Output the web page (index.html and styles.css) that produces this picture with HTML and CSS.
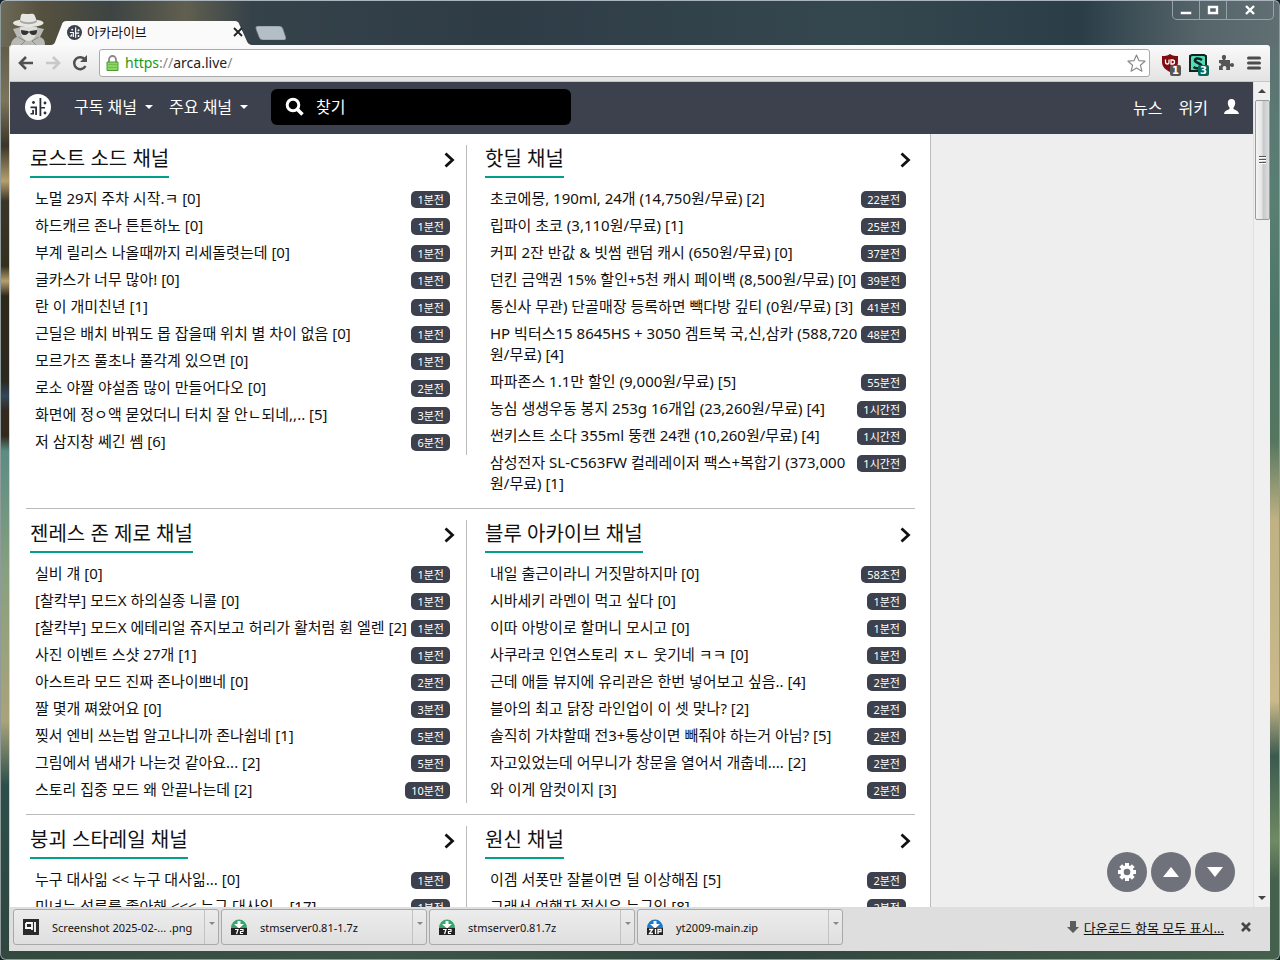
FILE: index.html
```html
<!DOCTYPE html>
<html lang="ko">
<head>
<meta charset="utf-8">
<title>아카라이브</title>
<link rel="stylesheet" href="styles.css">
</head>
<body>
<div class="window">
  <div class="titlebar">
    <svg class="incognito" width="40" height="32" viewBox="0 0 40 32" aria-hidden="true">
      <path d="M1 32c0-4 3-7 6-8L3 16l8-2h14l9 2-4 8c3 1 5 3 5 8z" fill="#b9b9b5"/>
      <path d="M10 14c0 9 4 14 8.500 14S27 23 27 14z" fill="#deded9"/>
      <path d="M3 10c0-2 5-3 7-3l1-5c1-2 4-1 6.500-1s6-1 7 1l2 5c3 0 7 1 7 3s-6 4-15 4S3 12 3 10z" fill="#e6e6e2"/>
      <path d="M10 7c5 3 12 3 17 0v2c-5 3-12 3-17 0z" fill="#a8a8a4"/>
      <path d="M11 17l7 1 1 1 1-1 7-1c0 4-1 5-4 5-2 0-3-2-4-3-1 1-2 3-4 3-3 0-4-1-4-5z" fill="#333"/>
      <path d="M8 24l7 4-4 4M29 24l-7 4 4 4" fill="none" stroke="#888" stroke-width="1"/>
    </svg>
    <div class="tab">
      <svg class="tab-shape" viewBox="0 0 216 24" preserveAspectRatio="none" aria-hidden="true"><path d="M0 24c4 0 5-2 6-5L12 4c1-3 2-4 5-4h173c3 0 4 1 5 4l7 15c1 3 3 5 7 5z" fill="#fafafa"/></svg>
      <svg class="favicon" width="15" height="15" viewBox="0 0 26 26" aria-hidden="true"><circle cx="13" cy="13" r="13" fill="#3d414d"/><g fill="#fff"><path d="M14 4h2v18h-2zM16 13h5v2h-5zM5 12h7v9h-2v-7H5zM7 16h2v4H5v-2h2z"/><circle cx="9" cy="8" r="1.700"/><circle cx="20" cy="9" r="1.700"/><circle cx="20" cy="19" r="1.700"/></g></svg>
      <span class="tab-title">아카라이브</span>
      <button class="tab-close" aria-label="탭 닫기"><svg width="10" height="10" viewBox="0 0 10 10"><path d="M1 1l8 8M9 1L1 9" stroke="#222" stroke-width="1.800"/></svg></button>
    </div>
    <button class="new-tab" aria-label="새 탭"><svg width="31" height="14" viewBox="0 0 31 14"><path d="M3 0h21q3 0 4 3l3 9q0 2-2 2H8q-3 0-4-3L1 3Q0 0 3 0z" fill="#b4bec6" stroke="#6d7a82" stroke-width=".6"/></svg></button>
    <div class="window-buttons">
      <button aria-label="최소화"><svg width="12" height="10" viewBox="0 0 12 10"><path d="M.5 6.500h11v3H.5z" fill="#fff" stroke="#556" stroke-width=".5"/></svg></button>
      <button aria-label="최대화"><svg width="12" height="10" viewBox="0 0 12 10"><path d="M2 2h8v6H2z" fill="none" stroke="#fff" stroke-width="2.400"/></svg></button>
      <button class="close" aria-label="닫기"><svg width="12" height="10" viewBox="0 0 12 10"><path d="M2 1l8 8M10 1L2 9" stroke="#fff" stroke-width="2.400"/></svg></button>
    </div>
  </div>

  <div class="client">
    <div class="toolbar">
      <button aria-label="뒤로"><svg width="16" height="14" viewBox="0 0 16 14"><path d="M8 1L2 7l6 6M2 7h13" fill="none" stroke="#505050" stroke-width="2.600"/></svg></button>
      <button aria-label="앞으로"><svg width="16" height="14" viewBox="0 0 16 14"><path d="M8 1l6 6-6 6M14 7H1" fill="none" stroke="#c8c8c8" stroke-width="2.600"/></svg></button>
      <button aria-label="새로고침"><svg width="16" height="16" viewBox="0 0 16 16"><path d="M13 4.500A6 6 0 1 0 13.500 11" fill="none" stroke="#505050" stroke-width="2.500"/><path d="M15 0v7H8z" fill="#505050"/></svg></button>
      <div class="omnibox">
        <svg width="13" height="16" viewBox="0 0 13 16" aria-hidden="true"><path d="M3 7V4.500a3.500 3.500 0 0 1 7 0V7" fill="none" stroke="#888" stroke-width="1.800"/><path d="M1 7h11v8.500H1z" fill="#8bd562" stroke="#4e9b35"/><path d="M2 9.500h9M2 12.500h9" stroke="#6fbf4b"/></svg>
        <a class="url" href="#"><span class="secure">https</span><span class="dim">://</span>arca.live<span class="dim">/</span></a>
        <button aria-label="북마크"><svg width="19" height="18" viewBox="0 0 19 18"><path d="M9.500 1l2.500 5.700 6 .5-4.600 4 1.500 6-5.400-3.300-5.400 3.300 1.500-6L1 7.200l6-.5z" fill="#fff" stroke="#8a8a8a" stroke-width="1.200" stroke-linejoin="round"/></svg></button>
      </div>
      <button class="ext" aria-label="uBlock"><svg width="18" height="18" viewBox="0 0 18 18"><path d="M9 0c3 2 5 2 8 2v6c0 5-4 8-8 10C5 16 1 13 1 8V2c3 0 5 0 8-2z" fill="#800b10"/><path d="M4.500 5.500V8q0 2 1.800 2T8 8V5.500M10 6h1.500a2 2 0 0 1 0 4H10z" fill="none" stroke="#fff" stroke-width="1.300"/></svg><span class="count">1</span></button>
      <button class="ext" aria-label="Stylus"><svg width="19" height="19" viewBox="0 0 19 19"><path d="M2 2l2-1h12l2 1v15H2z" fill="#4fdcb8" stroke="#10231f" stroke-width="2"/><path d="M14 6c-3-2-7-2-7 .500S13.500 9 13.500 12s-5 3-8 1" fill="none" stroke="#10231f" stroke-width="2.600"/></svg><span class="count green">3</span></button>
      <button class="ext" aria-label="확장 프로그램"><svg width="16" height="16" viewBox="0 0 16 16"><path d="M1 5h4C3 2 4 0 6 0s3 2 1 5h5v4c2-2 4-1 4 1s-2 3-4 1v4H8c1-3 0-4-1.500-4S4 12 5 15H1v-4c3 0 3-3 0-3z" fill="#555"/></svg></button>
      <button class="ext" aria-label="메뉴"><svg width="14" height="14" viewBox="0 0 14 14"><path d="M1.500 2h11M1.500 7h11M1.500 12h11" stroke="#4c4c4c" stroke-width="3" stroke-linecap="round"/></svg></button>
    </div>

    <div class="viewport">
      <div class="page">
        <header class="site-header">
          <a class="logo" href="#" aria-label="아카라이브"><svg width="26" height="26" viewBox="0 0 26 26"><circle cx="13" cy="13" r="13" fill="#fff"/><g fill="#2b2e38"><path d="M14.500 4h1.800v18h-1.800zM16 13h4v1.600h-4zM5.500 12.500H12V21h-1.800v-6.800H5.500zM7.200 16H9v4.500H5.500V19h1.700z"/><circle cx="8.500" cy="8.500" r="1.400"/><circle cx="20" cy="9" r="1.400"/><circle cx="20" cy="19" r="1.400"/></g></svg></a>
          <nav class="main-nav">
            <button>구독 채널<i class="caret"></i></button>
            <button>주요 채널<i class="caret"></i></button>
          </nav>
          <label class="search">
            <svg width="20" height="20" viewBox="0 0 20 20" aria-hidden="true"><circle cx="8" cy="8" r="5.800" fill="none" stroke="#fff" stroke-width="3"/><path d="M12 12l5.500 5.500" stroke="#fff" stroke-width="3.600"/></svg>
            <input type="text" placeholder="찾기" aria-label="찾기">
          </label>
          <nav class="user-nav">
            <a href="#">뉴스</a>
            <a href="#">위키</a>
            <a href="#" aria-label="사용자"><svg width="15" height="15" viewBox="0 0 15 15"><path d="M7.500 0C10 0 11.500 2 11.200 4.500c-.2 2-1 3-1.700 4V10c1 1 5 1.300 5.500 5H0c.5-3.700 4.500-4 5.500-5V8.500c-.7-1-1.500-2-1.700-4C3.500 2 5 0 7.500 0z" fill="#fff"/></svg></a>
          </nav>
        </header>
        <div class="content">
          <main class="boards">
            <div class="board-row">
              <section class="board">
                <h2><a href="#">로스트 소드 채널</a><a class="more" href="#" aria-label="더 보기"><svg width="11" height="16" viewBox="0 0 11 16"><path d="M1.500 1.500L8.500 8l-7 6.500" fill="none" stroke="#111" stroke-width="2.800"/></svg></a></h2>
                <ul>
                  <li><a href="#">노멀 29지 주차 시작.ㅋ [0]</a><time>1분전</time></li>
                  <li><a href="#">하드캐르 존나 튼튼하노 [0]</a><time>1분전</time></li>
                  <li><a href="#">부계 릴리스 나올때까지 리세돌렷는데 [0]</a><time>1분전</time></li>
                  <li><a href="#">글카스가 너무 많아! [0]</a><time>1분전</time></li>
                  <li><a href="#">란 이 개미친년 [1]</a><time>1분전</time></li>
                  <li><a href="#">근딜은 배치 바꿔도 몹 잡을때 위치 별 차이 없음 [0]</a><time>1분전</time></li>
                  <li><a href="#">모르가즈 풀초나 풀각계 있으면 [0]</a><time>1분전</time></li>
                  <li><a href="#">로소 야짤 야설좀 많이 만들어다오 [0]</a><time>2분전</time></li>
                  <li><a href="#">화면에 정ㅇ액 묻었더니 터치 잘 안ㄴ되네,,.. [5]</a><time>3분전</time></li>
                  <li><a href="#">저 삼지창 쎄긴 쎔 [6]</a><time>6분전</time></li>
                </ul>
              </section>
              <section class="board">
                <h2><a href="#">핫딜 채널</a><a class="more" href="#" aria-label="더 보기"><svg width="11" height="16" viewBox="0 0 11 16"><path d="M1.500 1.500L8.500 8l-7 6.500" fill="none" stroke="#111" stroke-width="2.800"/></svg></a></h2>
                <ul>
                  <li><a href="#">초코에몽, 190ml, 24개 (14,750원/무료) [2]</a><time>22분전</time></li>
                  <li><a href="#">립파이 초코 (3,110원/무료) [1]</a><time>25분전</time></li>
                  <li><a href="#">커피 2잔 반값 &amp; 빗썸 랜덤 캐시 (650원/무료) [0]</a><time>37분전</time></li>
                  <li><a href="#">던킨 금액권 15% 할인+5천 캐시 페이백 (8,500원/무료) [0]</a><time>39분전</time></li>
                  <li><a href="#">통신사 무관) 단골매장 등록하면 빽다방 깊티 (0원/무료) [3]</a><time>41분전</time></li>
                  <li><a href="#">HP 빅터스15 8645HS + 3050 겜트북 국,신,삼카 (588,720원/무료) [4]</a><time>48분전</time></li>
                  <li><a href="#">파파존스 1.1만 할인 (9,000원/무료) [5]</a><time>55분전</time></li>
                  <li><a href="#">농심 생생우동 봉지 253g 16개입 (23,260원/무료) [4]</a><time>1시간전</time></li>
                  <li><a href="#">썬키스트 소다 355ml 뚱캔 24캔 (10,260원/무료) [4]</a><time>1시간전</time></li>
                  <li><a href="#">삼성전자 SL-C563FW 컬레레이저 팩스+복합기 (373,000원/무료) [1]</a><time>1시간전</time></li>
                </ul>
              </section>
            </div>
            <div class="board-row">
              <section class="board">
                <h2><a href="#">젠레스 존 제로 채널</a><a class="more" href="#" aria-label="더 보기"><svg width="11" height="16" viewBox="0 0 11 16"><path d="M1.500 1.500L8.500 8l-7 6.500" fill="none" stroke="#111" stroke-width="2.800"/></svg></a></h2>
                <ul>
                  <li><a href="#">실비 걔 [0]</a><time>1분전</time></li>
                  <li><a href="#">[찰칵부] 모드X 하의실종 니콜 [0]</a><time>1분전</time></li>
                  <li><a href="#">[찰칵부] 모드X 에테리얼 쥬지보고 허리가 활처럼 휜 엘렌 [2]</a><time>1분전</time></li>
                  <li><a href="#">사진 이벤트 스샷 27개 [1]</a><time>1분전</time></li>
                  <li><a href="#">아스트라 모드 진짜 존나이쁘네 [0]</a><time>2분전</time></li>
                  <li><a href="#">짤 몇개 쪄왔어요 [0]</a><time>3분전</time></li>
                  <li><a href="#">찢서 엔비 쓰는법 알고나니까 존나쉽네 [1]</a><time>5분전</time></li>
                  <li><a href="#">그림에서 냄새가 나는것 같아요... [2]</a><time>5분전</time></li>
                  <li><a href="#">스토리 집중 모드 왜 안끝나는데 [2]</a><time>10분전</time></li>
                </ul>
              </section>
              <section class="board">
                <h2><a href="#">블루 아카이브 채널</a><a class="more" href="#" aria-label="더 보기"><svg width="11" height="16" viewBox="0 0 11 16"><path d="M1.500 1.500L8.500 8l-7 6.500" fill="none" stroke="#111" stroke-width="2.800"/></svg></a></h2>
                <ul>
                  <li><a href="#">내일 출근이라니 거짓말하지마 [0]</a><time>58초전</time></li>
                  <li><a href="#">시바세키 라멘이 먹고 싶다 [0]</a><time>1분전</time></li>
                  <li><a href="#">이따 아방이로 할머니 모시고 [0]</a><time>1분전</time></li>
                  <li><a href="#">사쿠라코 인연스토리 ㅈㄴ 웃기네 ㅋㅋ [0]</a><time>1분전</time></li>
                  <li><a href="#">근데 애들 뷰지에 유리관은 한번 넣어보고 싶음.. [4]</a><time>2분전</time></li>
                  <li><a href="#">블아의 최고 닭장 라인업이 이 셋 맞나? [2]</a><time>2분전</time></li>
                  <li><a href="#">솔직히 가챠할때 전3+통상이면 빼줘야 하는거 아님? [5]</a><time>2분전</time></li>
                  <li><a href="#">자고있었는데 어무니가 창문을 열어서 개춥네.... [2]</a><time>2분전</time></li>
                  <li><a href="#">와 이게 암컷이지 [3]</a><time>2분전</time></li>
                </ul>
              </section>
            </div>
            <div class="board-row">
              <section class="board">
                <h2><a href="#">붕괴 스타레일 채널</a><a class="more" href="#" aria-label="더 보기"><svg width="11" height="16" viewBox="0 0 11 16"><path d="M1.500 1.500L8.500 8l-7 6.500" fill="none" stroke="#111" stroke-width="2.800"/></svg></a></h2>
                <ul>
                  <li><a href="#">누구 대사읾 &lt;&lt; 누구 대사읾... [0]</a><time>1분전</time></li>
                  <li><a href="#">미녀는 석류를 좋아해 &lt;&lt;&lt; 누구 대사임... [17]</a><time>1분전</time></li>
                </ul>
              </section>
              <section class="board">
                <h2><a href="#">원신 채널</a><a class="more" href="#" aria-label="더 보기"><svg width="11" height="16" viewBox="0 0 11 16"><path d="M1.500 1.500L8.500 8l-7 6.500" fill="none" stroke="#111" stroke-width="2.800"/></svg></a></h2>
                <ul>
                  <li><a href="#">이겜 서폿만 잘붙이면 딜 이상해짐 [5]</a><time>2분전</time></li>
                  <li><a href="#">그래서 여행자 정실은 누구임 [8]</a><time>2분전</time></li>
                </ul>
              </section>
            </div>
          </main>
        </div>
        <div class="floating">
          <button aria-label="설정"><svg width="20" height="20" viewBox="0 0 20 20"><g stroke="#fff" stroke-width="4"><path d="M10 1v18M1 10h18M3.700 3.700l12.600 12.600M16.300 3.700L3.700 16.300"/></g><circle cx="10" cy="10" r="6.800" fill="#fff"/><circle cx="10" cy="10" r="3.300" fill="#70727b"/></svg></button>
          <button aria-label="맨 위로"><svg width="16" height="10" viewBox="0 0 16 10"><path d="M8 0l8 10H0z" fill="#fff"/></svg></button>
          <button aria-label="맨 아래로"><svg width="16" height="10" viewBox="0 0 16 10"><path d="M0 0h16L8 10z" fill="#fff"/></svg></button>
        </div>
      </div>
      <div class="scrollbar" aria-hidden="true">
        <svg width="8" height="5" viewBox="0 0 8 5"><path d="M4 0l4 4H0z" fill="#444"/></svg>
        <div class="thumb"><i></i><i></i><i></i></div>
        <svg class="end" width="8" height="5" viewBox="0 0 8 5"><path d="M0 0h8L4 4z" fill="#444"/></svg>
      </div>
    </div>

    <footer class="downloads">
      <div class="download">
        <button class="file"><svg width="16" height="16" viewBox="0 0 16 16"><path d="M0 0h16v16H0z" fill="#2b2b2b"/><path d="M3 4h6v7M9 9H3V4M12 3v10" fill="none" stroke="#fff" stroke-width="1.800"/></svg>Screenshot 2025-02-... .png</button><button class="drop" aria-label="옵션"></button>
      </div>
      <div class="download">
        <button class="file"><svg width="16" height="16" viewBox="0 0 16 16"><path d="M0 9a8 8.500 0 0 1 16 0z" fill="#36a568"/><path d="M6.500 2h3v3H13L8 9.500 3 5h3.500z" fill="#fff"/><path d="M0 9h16v7H0z" fill="#222"/><path d="M4 10.500h3L5.500 15M9 10.500h3v2H9.500v2H12" fill="none" stroke="#fff" stroke-width="1.200"/></svg>stmserver0.81-1.7z</button><button class="drop" aria-label="옵션"></button>
      </div>
      <div class="download">
        <button class="file"><svg width="16" height="16" viewBox="0 0 16 16"><path d="M0 9a8 8.500 0 0 1 16 0z" fill="#36a568"/><path d="M6.500 2h3v3H13L8 9.500 3 5h3.500z" fill="#fff"/><path d="M0 9h16v7H0z" fill="#222"/><path d="M4 10.500h3L5.500 15M9 10.500h3v2H9.500v2H12" fill="none" stroke="#fff" stroke-width="1.200"/></svg>stmserver0.81.7z</button><button class="drop" aria-label="옵션"></button>
      </div>
      <div class="download">
        <button class="file"><svg width="16" height="16" viewBox="0 0 16 16"><path d="M0 9a8 8.500 0 0 1 16 0z" fill="#1b78c8"/><path d="M6.500 2h3v3H13L8 9.500 3 5h3.500z" fill="#fff"/><path d="M0 9h16v7H0z" fill="#222"/><path d="M2 10.500h3.500L2.500 14.500h3.500M8.500 10v5M11 15v-4.500h3v2.200h-3" fill="none" stroke="#fff" stroke-width="1.300"/></svg>yt2009-main.zip</button><button class="drop" aria-label="옵션"></button>
      </div>
      <a class="show-all" href="#"><svg width="12" height="12" viewBox="0 0 12 12" aria-hidden="true"><path d="M3 0h6v6h3l-6 6-6-6h3z" fill="#5c5c5c"/></svg><span>다운로드 항목 모두 표시...</span></a>
      <button class="bar-close" aria-label="닫기"><svg width="10" height="10" viewBox="0 0 10 10"><path d="M1 1l8 8M9 1L1 9" stroke="#444" stroke-width="2.600"/></svg></button>
    </footer>
  </div>
</div>
</body>
</html>
```
FILE: styles.css
```css
* { box-sizing: border-box; }

body {
  margin: 0;
  background: #14202a;
  font-family: "Noto Sans", "Noto Sans CJK KR", sans-serif;
  font-size: 15px;
  color: #111;
}

button {
  margin: 0;
  padding: 0;
  border: 0;
  background: none;
  color: inherit;
  font: inherit;
  display: flex;
  align-items: center;
  justify-content: center;
}

a { color: inherit; text-decoration: none; }
svg { display: block; flex: none; }

/* window frame */
.window {
  height: 100vh;
  display: flex;
  flex-direction: column;
  padding: 0 9px 8px 8px;
  border: 1px solid #8f9a9a;
  border-top-color: #aab4bc;
  border-radius: 6px;
  background:
    linear-gradient(90deg, #6c6a58 0, #56513e 40px, rgba(62, 68, 66, 0.9) 110px, #615f4f 185px, #35424a 250px, #2e3c46 500px, #35474e 850px, #2b3e48 1080px, #56656a 1200px, #5f6f72 100%) 0 0 / 100% 46px no-repeat,
    linear-gradient(90deg, #33483f, #3d5548 30%, #31453f 60%, #45604c) 0 100% / 100% 9px no-repeat,
    linear-gradient(180deg, #4b4a3d, #7d745c 100px, #3a3529 145px, #b59f6c 180px, #3a3529 200px, #33301f 265px, #b59f6c 280px, #2e281c 295px, #2b2920 380px, #33485a 395px, #33291d 410px, #33291d 435px, #5b8c83 450px, #87a07f 570px, #aaa37a 720px, #2b4f4b 785px, #31453f) 0 0 / 10px 100% no-repeat,
    linear-gradient(180deg, #5f6f72, #587f72 200px, #4d7568 320px, #55765f 440px, #c0b285 520px, #c9b98b 700px, #3b5a4e 755px, #6f8a64 840px, #45604c 880px, #45604c) 100% 0 / 10px 100% no-repeat,
    #35454a;
}

.titlebar {
  height: 44px;
  flex: none;
  display: flex;
  align-items: flex-end;
}

.incognito { margin: 0 4px 0 1px; }

.tab {
  position: relative;
  width: 210px;
  height: 24px;
  margin-left: -4px;
  padding: 0 16px 2px 17px;
  display: flex;
  align-items: center;
  gap: 5px;
  font-size: 13px;
}
.tab-shape { position: absolute; left: 0; top: 0; width: 100%; height: 100%; z-index: 0; }
.favicon, .tab-title, .tab-close { position: relative; }
.tab-title { flex: 1; line-height: 20px; }
.tab-close { width: 12px; height: 16px; }
.new-tab { align-self: flex-end; margin: 0 0 5px -5px; }

.window-buttons {
  align-self: flex-start;
  margin: 0 -4px 0 auto;
  display: flex;
  height: 19px;
  border: 1px solid #97a2a8;
  border-top: 0;
  border-radius: 0 0 5px 5px;
}
.window-buttons button { width: 27px; border-right: 1px solid #97a2a8; }
.window-buttons .close { width: 46px; border-right: 0; }

.client {
  flex: 1;
  min-height: 0;
  display: flex;
  flex-direction: column;
  border: solid #d5d5d5;
  border-width: 0 0 0 1px;
  border-radius: 3px 3px 0 0;
  overflow: hidden;
}

/* browser toolbar */
.toolbar {
  flex: none;
  height: 37px;
  display: flex;
  align-items: center;
  gap: 11px;
  padding: 0 8px;
  background: linear-gradient(#fafafa, #e3e3e3);
  border-bottom: 1px solid #c6c6c6;
}
.toolbar > button { width: 16px; height: 20px; }
.omnibox {
  flex: 1;
  height: 28px;
  display: flex;
  align-items: center;
  gap: 6px;
  padding: 0 3px 0 6px;
  border: 1px solid #a9a9a9;
  border-radius: 3px;
  background: #fff;
}
.url { flex: 1; line-height: 24px; color: #222; font-size: 14px; }
.secure { color: #169a16; }
.dim { color: #888; }
.toolbar .ext { position: relative; width: 17px; }
.count {
  position: absolute;
  right: -3px;
  bottom: -3px;
  width: 11px;
  height: 11px;
  border-radius: 2px;
  background: #555;
  color: #fff;
  font: bold 10px/11px "DejaVu Sans", sans-serif;
  text-align: center;
}
.count.green { background: #00695c; }

/* page area */
.viewport { flex: 1; min-height: 0; display: flex; background: #eee; }
.page {
  position: relative;
  flex: 1;
  min-width: 0;
  overflow: hidden;
}
.site-header {
  height: 52px;
  display: flex;
  align-items: center;
  padding: 0 14px 3px 15px;
  background: #3d414d;
  color: #fff;
  font-size: 16px;
}
.main-nav { display: flex; gap: 16px; margin: 0 23px; }
.main-nav button { gap: 8px; line-height: 24px; }
.caret { border: solid transparent; border-width: 4px 4px 0; border-top-color: #fff; }
.search {
  flex: 0 1 300px;
  height: 36px;
  display: flex;
  align-items: center;
  gap: 11px;
  padding: 0 14px;
  border-radius: 6px;
  background: #000;
}
.search input {
  flex: 1;
  min-width: 0;
  padding: 0;
  border: 0;
  outline: 0;
  background: none;
  color: #fff;
  font: inherit;
}
.search input::placeholder { color: #fff; opacity: 1; }
.user-nav { display: flex; align-items: center; gap: 16px; margin-left: auto; }

.content { display: grid; grid-template-columns: 921fr 322fr; }
.boards { padding: 0 15px 0 16px; background: #fff; border-right: 1px solid #bbb; }

.board-row {
  display: grid;
  grid-template-columns: 441fr 448fr;
  align-items: start;
  padding: 11px 0;
  border-bottom: 1px solid #bbb;
}
.board { min-width: 0; padding: 0 11px 0 4px; border-right: 1px solid #bbb; }
.board + .board { padding: 0 4px 0 18px; border-right: 0; }
.board h2 {
  margin: 0 0 7px;
  height: 33px;
  display: flex;
  justify-content: space-between;
  font-size: 20px;
  font-weight: 400;
  line-height: 28px;
}
.board h2 a:first-child { border-bottom: 2px solid #00a08a; }
.more { padding-top: 7px; }
.board ul { margin: 0; padding: 0 5px; list-style: none; }
.board li {
  display: flex;
  justify-content: space-between;
  align-items: flex-start;
  gap: 1px;
  padding: 3px 0;
  line-height: 21px;
}
time {
  flex: none;
  margin-top: 3px;
  padding: 0 6px;
  border-radius: 5px;
  background: #3d414d;
  color: #fff;
  font-size: 11px;
  line-height: 17px;
}

.floating { position: absolute; right: 18px; bottom: 15px; display: flex; gap: 4px; }
.floating button { width: 40px; height: 40px; border-radius: 50%; background: #70727b; }

.scrollbar {
  width: 17px;
  display: flex;
  flex-direction: column;
  align-items: center;
  padding: 7px 1px 6px;
  border-left: 1px solid #e0e0e0;
  background: #f0f0f0;
}
.thumb {
  width: 15px;
  height: 120px;
  margin-top: 6px;
  display: flex;
  flex-direction: column;
  align-items: center;
  justify-content: center;
  gap: 1px;
  border: 1px solid #999;
  border-radius: 2px;
  background: linear-gradient(90deg, #f5f5f5, #e5e5e5 45%, #c6c8ca 55%, #dedede);
}
.thumb i { width: 7px; height: 2px; border-top: 1px solid #555; background: #fff; }
.scrollbar .end { margin-top: auto; }

/* download shelf */
.downloads {
  flex: none;
  height: 44px;
  display: flex;
  align-items: center;
  gap: 2px;
  padding: 0 18px 4px 3px;
  background: #dedede;
  font-size: 11px;
}
.download {
  flex: 0 1 206px;
  min-width: 0;
  height: 36px;
  display: flex;
  border: 1px solid #a9a9a9;
  border-radius: 3px;
  background: linear-gradient(#ececec, #dfdfdf);
}
.file { flex: 1; min-width: 0; justify-content: flex-start; gap: 13px; padding-left: 9px; white-space: nowrap; }
.drop { width: 14px; flex: none; border-left: 1px solid #c2c2c2; align-items: flex-start; padding-top: 12px; }
.drop::after { content: ""; border: solid transparent; border-width: 3px 3px 0; border-top-color: #888; }
.show-all { margin-left: auto; display: flex; align-items: center; gap: 5px; font-size: 13px; }
.show-all span { text-decoration: underline; }
.bar-close { margin-left: 14px; width: 12px; height: 16px; }
```
